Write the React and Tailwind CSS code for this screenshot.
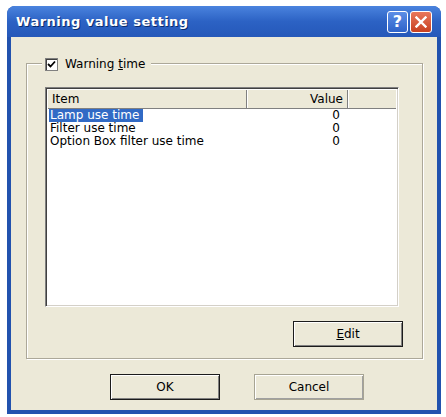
import React from 'react';

// --- Small pieces ---
const XpButton = ({ children, isDefault, className = '' }) => (
  <button
    className={`h-[26px] w-[110px] bg-[#ECE9D8] text-[12px] text-black flex items-center justify-center ${
      isDefault
        ? 'border border-[#1b1b1b] shadow-[inset_1px_1px_0_#fff,inset_-1px_-1px_0_#808080]'
        : 'border border-[#a7a493] shadow-[inset_1px_1px_0_#fff,inset_-1px_-1px_0_#a0a0a0]'
    } ${className}`}
  >
    {children}
  </button>
);

const rows = [
  { item: 'Lamp use time', value: 0, selected: true },
  { item: 'Filter use time', value: 0 },
  { item: 'Option Box filter use time', value: 0 },
];

const App = () => {
  return (
    <div className="w-[446px] h-[417px] bg-white pt-[6px] pl-[7px] font-['DejaVu_Sans',sans-serif]">
      <div className="w-[434px] h-[408px] rounded-t-[8px] bg-[#2252AE] flex flex-col overflow-hidden">
        {/* title bar */}
        <div className="h-[31px] flex items-center pl-[9px] pr-[9px] bg-gradient-to-b from-[#4A83DE] via-[#2C62C4] to-[#2558B9]">
          <span className="text-white font-bold text-[13px] tracking-[0.5px] [text-shadow:1px_1px_0_#0b2c6b]">
            Warning value setting
          </span>
          <div className="ml-auto flex gap-[2px]">
            <div className="w-[21px] h-[22px] rounded-[3px] border border-white bg-gradient-to-b from-[#5C8EE6] to-[#2E63C9] text-white font-bold text-[16px] leading-[20px] text-center">
              ?
            </div>
            <div className="w-[22px] h-[22px] rounded-[3px] border border-white bg-gradient-to-b from-[#E8775B] to-[#C8401F] flex items-center justify-center">
              <svg width="12" height="12" viewBox="0 0 12 12">
                <path d="M1.5 1.5 L10.5 10.5 M10.5 1.5 L1.5 10.5" stroke="white" strokeWidth="2.4" strokeLinecap="square" />
              </svg>
            </div>
          </div>
        </div>

        {/* client area */}
        <div className="mx-[4px] mb-[4px] flex-1 bg-[#ECE9D8] pt-[26px] pl-[15px] flex flex-col">
          {/* group box */}
          <div className="relative w-[397px] h-[296px] border border-[#aca899] shadow-[inset_1px_1px_0_#fff,1px_1px_0_#fff] pl-[18px] pt-[23px] flex flex-col">
            <div className="absolute left-[15px] -top-[7px] bg-[#ECE9D8] pl-[3px] pr-[6px] flex items-center gap-[7px] text-[12px] leading-[14px]">
              <div className="w-[13px] h-[13px] bg-white border border-[#808080] shadow-[inset_1px_1px_0_#404040] flex items-center justify-center">
                <svg width="9" height="9" viewBox="0 0 9 9">
                  <path d="M1 4 L3.5 6.5 L8 1.5" fill="none" stroke="black" strokeWidth="1.8" />
                </svg>
              </div>
              <span>
                Warning <span className="underline">t</span>ime
              </span>
            </div>

            {/* list view */}
            <div className="w-[354px] h-[220px] bg-white border border-t-[#808080] border-l-[#808080] border-r-[#fff] border-b-[#fff] shadow-[inset_1px_1px_0_#404040,inset_-1px_-1px_0_#d4d0c8] p-[2px] flex flex-col">
              <div className="h-[19px] flex text-[12px] leading-[19px] bg-[#ECE9D8] border-b border-[#808080]">
                <div className="w-[199px] pl-[4px] border-r border-[#808080] shadow-[1px_0_0_#fff]">Item</div>
                <div className="w-[101px] pr-[4px] text-right border-r border-[#808080] shadow-[1px_0_0_#fff]">Value</div>
                <div className="flex-1" />
              </div>
              <div className="flex flex-col text-[12px] leading-[13px]">
                {rows.map((r) => (
                  <div key={r.item} className="flex h-[13px]">
                    <div className="w-[199px] pl-[1px]">
                      <span className={r.selected ? 'bg-[#316AC5] text-white inline-block pl-[1px] pr-[4px]' : 'px-[1px]'}>
                        {r.item}
                      </span>
                    </div>
                    <div className="w-[93px] text-right">{r.value}</div>
                  </div>
                ))}
              </div>
            </div>

            <XpButton isDefault className="self-end mr-[19px] mt-[14px] h-[25px]">
              <span><span className="underline">E</span>dit</span>
            </XpButton>
          </div>

          {/* dialog buttons */}
          <div className="flex pl-[84px] mt-[15px] gap-[34px]">
            <XpButton isDefault>OK</XpButton>
            <XpButton className="w-[109px]">Cancel</XpButton>
          </div>
        </div>
      </div>
    </div>
  );
};

export default App;
